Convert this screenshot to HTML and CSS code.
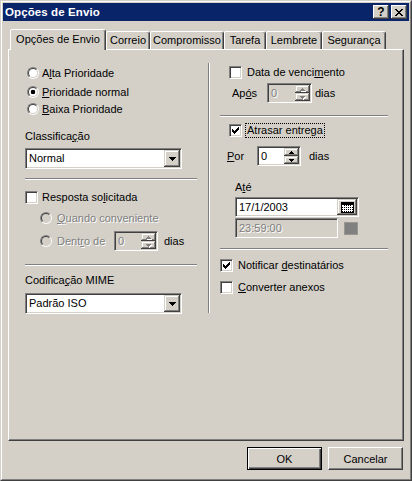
FILE: index.html
```html
<!DOCTYPE html>
<html lang="pt">
<head>
<meta charset="utf-8">
<title>Opções de Envio</title>
<link rel="stylesheet" href="styles.css">
</head>
<body>
<div class="window">
  <div class="frame">
    <div class="titlebar">
      <span class="title">Opções de Envio</span>
      <div class="caps">
        <span class="capbtn help">?</span>
        <span class="capbtn close"><svg width="8" height="7" viewBox="0 0 8 7" shape-rendering="crispEdges"><path d="M0 0h2v1h-2z M6 0h2v1h-2z M1 1h2v1h-2z M5 1h2v1h-2z M2 2h4v1h-4z M3 3h2v1h-2z M2 4h4v1h-4z M1 5h2v1h-2z M5 5h2v1h-2z M0 6h2v1h-2z M6 6h2v1h-2z" fill="#000"/></svg></span>
      </div>
    </div>
    <div class="body">
      <div class="tabs">
        <div class="tab active w1">Opções de Envio</div>
        <div class="tab w2">Correio</div>
        <div class="tab w3">Compromisso</div>
        <div class="tab w4">Tarefa</div>
        <div class="tab w5">Lembrete</div>
        <div class="tab w6">Segurança</div>
      </div>
      <div class="panel">
        <div class="cols">
          <div class="col left">
            <div class="row l-r1"><span class="radio"><i></i></span><span class="lbl">A<u>l</u>ta Prioridade</span></div>
            <div class="row l-r2"><span class="radio on"><i></i></span><span class="lbl"><u>P</u>rioridade normal</span></div>
            <div class="row l-r3"><span class="radio"><i></i></span><span class="lbl"><u>B</u>aixa Prioridade</span></div>
            <div class="row l-lab1">Classifica<u>ç</u>ão</div>
            <div class="combo l-combo1"><span class="val">Normal</span><span class="dd"><svg width="7" height="4" viewBox="0 0 7 4" shape-rendering="crispEdges"><path d="M0,0h7v1h-1v1h-1v1h-1v1h-1v-1h-1v-1h-1v-1h-1z" fill="#000"/></svg></span></div>
            <div class="sep l-sep1"></div>
            <div class="row l-chk"><span class="check"></span><span class="lbl gap4">Resposta so<u>l</u>icitada</span></div>
            <div class="row l-quando dis"><span class="radio dis"><i></i></span><span class="lbl"><u>Q</u>uando conveniente</span></div>
            <div class="row l-dentro"><span class="radio dis"><i></i></span><span class="lbl dis wlbl">Dent<u>r</u>o de</span>
              <span class="spin dis w44"><span class="val">0</span><span class="arrows"><span class="sbtn"><svg width="5" height="3" viewBox="0 0 5 3" shape-rendering="crispEdges"><path d="M2,0h1v1h1v1h1v1h-5v-1h1v-1h1z" class="arr"/></svg></span><span class="sbtn"><svg width="5" height="3" viewBox="0 0 5 3" shape-rendering="crispEdges"><path d="M0,0h5v1h-1v1h-1v1h-1v-1h-1v-1h-1z" class="arr"/></svg></span></span></span>
              <span class="unit u6">dias</span></div>
            <div class="sep l-sep2"></div>
            <div class="row l-lab2">Codifica<u>ç</u>ão MIME</div>
            <div class="combo l-combo2"><span class="val">Padrão ISO</span><span class="dd"><svg width="7" height="4" viewBox="0 0 7 4" shape-rendering="crispEdges"><path d="M0,0h7v1h-1v1h-1v1h-1v1h-1v-1h-1v-1h-1v-1h-1z" fill="#000"/></svg></span></div>
          </div>
          <div class="vdiv"></div>
          <div class="col right">
            <div class="row r-chk1"><span class="check"></span><span class="lbl gap5">Data de venci<u>m</u>ento</span></div>
            <div class="row r-apos"><span class="lbl wapos">Ap<u>ó</u>s</span>
              <span class="spin dis w45"><span class="val">0</span><span class="arrows"><span class="sbtn"><svg width="5" height="3" viewBox="0 0 5 3" shape-rendering="crispEdges"><path d="M2,0h1v1h1v1h1v1h-5v-1h1v-1h1z" class="arr"/></svg></span><span class="sbtn"><svg width="5" height="3" viewBox="0 0 5 3" shape-rendering="crispEdges"><path d="M0,0h5v1h-1v1h-1v1h-1v-1h-1v-1h-1z" class="arr"/></svg></span></span></span>
              <span class="unit u3">dias</span></div>
            <div class="sep r-sep1"></div>
            <div class="row r-chk2"><span class="check"><svg width="7" height="7" viewBox="0 0 7 7" shape-rendering="crispEdges"><path d="M6,0h1v3h-1z M5,1h1v3h-1z M4,2h1v3h-1z M3,3h1v3h-1z M2,4h1v3h-1z M1,3h1v3h-1z M0,2h1v3h-1z" fill="#000"/></svg></span><span class="focus">Atrasar entre<u>g</u>a</span></div>
            <div class="row r-por"><span class="lbl wpor"><u>P</u>or</span>
              <span class="spin w44"><span class="val">0</span><span class="arrows"><span class="sbtn"><svg width="5" height="3" viewBox="0 0 5 3" shape-rendering="crispEdges"><path d="M2,0h1v1h1v1h1v1h-5v-1h1v-1h1z" fill="#000"/></svg></span><span class="sbtn"><svg width="5" height="3" viewBox="0 0 5 3" shape-rendering="crispEdges"><path d="M0,0h5v1h-1v1h-1v1h-1v-1h-1v-1h-1z" fill="#000"/></svg></span></span></span>
              <span class="unit u7">dias</span></div>
            <div class="row r-ate">A<u>t</u>é</div>
            <div class="dtp r-date"><span class="val">17/1/2003</span><span class="calbtn"><svg width="13" height="11" viewBox="0 0 13 11" shape-rendering="crispEdges"><rect x="0.5" y="0.5" width="12" height="10" fill="#fff" stroke="#000"/><rect x="1" y="1" width="11" height="2" fill="#000"/><path d="M1 5h11 M1 7h11 M1 9h11 M3 3v7 M5 3v7 M7 3v7 M9 3v7" stroke="#000" stroke-width="1" stroke-dasharray="1 1" fill="none"/></svg></span></div>
            <div class="timerow r-time"><span class="timefield">23:59:00</span><span class="graysq"></span></div>
            <div class="sep r-sep2"></div>
            <div class="row r-chk3"><span class="check"><svg width="7" height="7" viewBox="0 0 7 7" shape-rendering="crispEdges"><path d="M6,0h1v3h-1z M5,1h1v3h-1z M4,2h1v3h-1z M3,3h1v3h-1z M2,4h1v3h-1z M1,3h1v3h-1z M0,2h1v3h-1z" fill="#000"/></svg></span><span class="lbl gap5">Notificar <u>d</u>estinatários</span></div>
            <div class="row r-chk4"><span class="check"></span><span class="lbl gap5"><u>C</u>onverter anexos</span></div>
          </div>
        </div>
      </div>
      <div class="buttons">
        <div class="btn default">OK</div>
        <div class="btn">Cancelar</div>
      </div>
    </div>
  </div>
</div>
</body>
</html>
```
FILE: styles.css
```css
* { box-sizing: border-box; }
html, body { margin: 0; padding: 0; }
body {
  width: 412px; height: 481px; overflow: hidden;
  background: #D4D0C8;
  font-family: "Liberation Sans", Arial, sans-serif;
  font-size: 11px; color: #000;
}
u { text-decoration: underline; text-underline-offset: 1px; }

.window {
  width: 412px; height: 481px;
  border: 1px solid; border-color: #D4D0C8 #404040 #404040 #D4D0C8;
}
.frame {
  height: 100%;
  border: 1px solid; border-color: #fff #808080 #808080 #fff;
  padding: 1px;
  display: flex; flex-direction: column;
}
.titlebar {
  height: 18px; flex: none;
  background: #0A246A;
  display: flex; align-items: center; justify-content: space-between;
  padding: 0 2px 0 2px;
}
.title { color: #fff; font-weight: bold; font-size: 11.5px; letter-spacing: 0.1px; }
.caps { display: flex; gap: 2px; }
.capbtn {
  width: 16px; height: 14px;
  background: #D4D0C8;
  box-shadow: inset -1px -1px #404040, inset 1px 1px #fff, inset -2px -2px #808080;
  display: flex; align-items: center; justify-content: center;
  font-weight: bold; font-size: 12px; line-height: 14px;
}

.body { flex: 1; padding: 8px 5px 0 5px; display: flex; flex-direction: column; }

.tabs { display: flex; align-items: flex-end; height: 20px; padding-left: 2px; position: relative; z-index: 1; flex: none; }
.tab {
  height: 18px;
  border: 1px solid; border-bottom: none;
  border-color: #fff #404040 transparent #fff;
  border-radius: 2px 3px 0 0;
  box-shadow: inset -1px 0 #808080;
  display: flex; align-items: center; justify-content: center;
  padding-bottom: 1px;
  white-space: nowrap;
}
.tab.active { height: 21px; margin-bottom: -1px; background: #D4D0C8; padding-bottom: 3px; }
.w1 { width: 96px; }
.w2 { width: 44px; }
.w3 { width: 74px; }
.w4 { width: 42px; }
.w5 { width: 56px; }
.w6 { width: 64px; }

.panel {
  height: 392px; flex: none;
  border: 1px solid; border-color: #fff #404040 #404040 #fff;
  box-shadow: inset -1px -1px #808080;
  padding: 13px 0 0 16px;
}
.cols { display: flex; align-items: flex-start; }
.col { display: flex; flex-direction: column; }
.col.left { width: 172px; }
.col.right { width: 168px; }
.vdiv { width: 2px; height: 250px; margin: 0 10px 0 11px; border-left: 1px solid #808080; border-right: 1px solid #fff; }

.row { display: flex; align-items: center; height: 16px; white-space: nowrap; flex: none; }
.sep { height: 2px; border-top: 1px solid #808080; border-bottom: 1px solid #fff; flex: none; }

/* left column vertical rhythm */
.l-r1 { margin-top: 2px; padding-left: 2px; }
.l-r2 { margin-top: 3px; padding-left: 2px; }
.l-r3 { margin-top: 1px; padding-left: 2px; }
.l-lab1 { margin-top: 11px; }
.l-combo1 { margin-top: 4px; }
.l-sep1 { margin-top: 9px; }
.l-chk { margin-top: 9px; }
.l-quando { margin-top: 5px; padding-left: 15px; }
.l-dentro { margin-top: 5px; height: 20px; padding-left: 15px; }
.l-sep2 { margin-top: 13px; }
.l-lab2 { margin-top: 6px; }
.l-combo2 { margin-top: 5px; }

/* right column vertical rhythm */
.r-chk1 { margin-top: 1px; padding-left: 9px; }
.r-apos { margin-top: 3px; height: 20px; padding-left: 12px; }
.r-sep1 { margin-top: 12px; }
.r-chk2 { margin-top: 5px; padding-left: 9px; height: 17px; }
.r-por { margin-top: 7px; height: 20px; padding-left: 7px; }
.r-ate { margin-top: 13px; padding-left: 15px; }
.r-date { margin-top: 2px; margin-left: 15px; }
.r-time { margin-top: 1px; margin-left: 15px; }
.r-sep2 { margin-top: 10px; }
.r-chk3 { margin-top: 7px; }
.r-chk4 { margin-top: 6px; }

.lbl { margin-left: 3px; }
.l-quando .lbl, .l-dentro .lbl { margin-left: 5px; }
.gap4 { margin-left: 4px; }
.gap5 { margin-left: 5px; }
.wlbl { width: 57px; }
.wapos { margin-left: 0; width: 35px; }
.wpor { margin-left: 0; width: 30px; }
.dis, .dis .lbl { color: #808080; text-shadow: 1px 1px 0 #fff; }
.unit { color: #000; text-shadow: none; }
.u3 { margin-left: 3px; }
.u6 { margin-left: 6px; }
.u7 { margin-left: 8px; }

/* radio */
.radio {
  width: 12px; height: 12px; flex: none;
  border-radius: 50%;
  border: 1px solid; border-color: #808080 #fff #fff #808080;
  display: block;
}
.radio i {
  display: block; width: 10px; height: 10px;
  border-radius: 50%;
  border: 1px solid; border-color: #404040 #D4D0C8 #D4D0C8 #404040;
  background: #fff;
}
.radio.on i { background: radial-gradient(circle at 50% 50%, #000 0 2px, #fff 2.6px); }
.radio.dis i { background: #D4D0C8; }

/* checkbox */
.check {
  width: 13px; height: 13px; flex: none;
  border: 1px solid; border-color: #808080 #fff #fff #808080;
  background: #fff;
  box-shadow: inset 1px 1px #404040, inset -1px -1px #D4D0C8;
  display: flex; align-items: center; justify-content: center;
}
.focus {
  margin-left: 3px;
  border: 1px dotted #000;
  padding: 0 1px;
  line-height: 13px;
}

/* sunken fields */
.combo, .spin, .dtp, .timefield {
  border: 1px solid; border-color: #808080 #fff #fff #808080;
  box-shadow: inset 1px 1px #404040, inset -1px -1px #D4D0C8;
  background: #fff;
  padding: 1px;
  display: flex; flex: none;
}
.combo { width: 157px; height: 21px; }
.combo .val { flex: 1; padding-left: 2px; line-height: 17px; }
.combo .dd, .sbtn, .calbtn {
  background: #D4D0C8;
  box-shadow: inset -1px -1px #404040, inset 1px 1px #D4D0C8, inset -2px -2px #808080, inset 2px 2px #fff;
  display: flex; align-items: center; justify-content: center;
}
.combo .dd { width: 16px; height: 17px; padding-top: 1px; }

.spin { height: 20px; }
.w44 { width: 44px; }
.w45 { width: 45px; }
.spin .val { flex: 1; padding-left: 2px; line-height: 16px; }
.spin.dis { background: #D4D0C8; }
.spin .arrows { width: 15px; display: flex; flex-direction: column; }
.sbtn { flex: 1; height: 8px; }
.arr { fill: #808080; }
.spin.dis .sbtn svg { filter: drop-shadow(1px 1px 0 #fff); }

.dtp { width: 124px; height: 20px; }
.dtp .val { flex: 1; padding-left: 2px; line-height: 16px; }
.calbtn { width: 20px; height: 16px; }

.timerow { display: flex; align-items: center; gap: 6px; }
.timefield { width: 103px; height: 20px; background: #D4D0C8; color: #808080; text-shadow: 1px 1px 0 #fff; padding-left: 3px; line-height: 16px; }
.graysq { width: 14px; height: 13px; background: #808080; border: 1px solid #9a9790; }

/* buttons */
.buttons { display: flex; justify-content: flex-end; gap: 6px; padding: 6px 1px 0 0; }
.btn {
  width: 75px; height: 23px;
  border: 1px solid; border-color: #fff #404040 #404040 #fff;
  box-shadow: inset -1px -1px #808080;
  display: flex; align-items: center; justify-content: center;
}
.btn.default {
  border-color: #000;
  box-shadow: inset 1px 1px #fff, inset -1px -1px #404040, inset -2px -2px #808080;
}
```
